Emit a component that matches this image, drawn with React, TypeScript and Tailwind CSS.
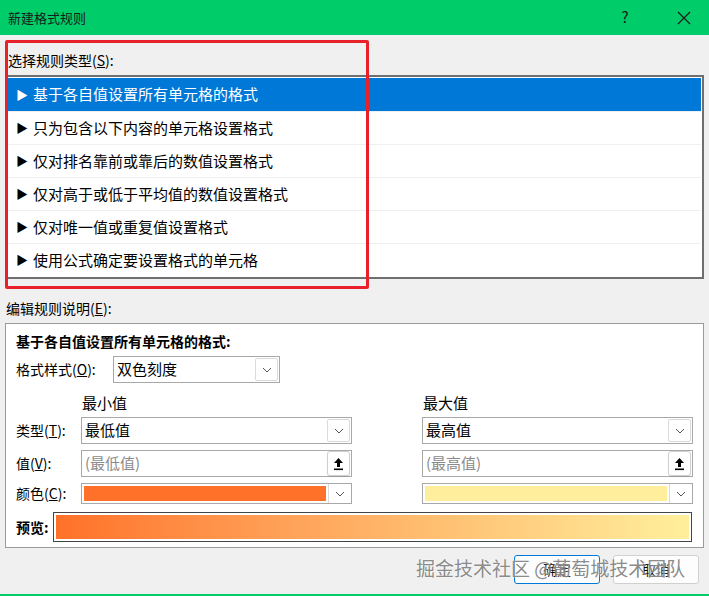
import React from "react";

const font = { fontFamily: '"Noto Sans CJK SC", "Noto Sans", sans-serif' };

function Chevron() {
    return (
        <div className="w-[23px] h-[23px] mr-px border border-[#dadada] rounded-[2px] bg-white flex items-center justify-center">
            <svg width="10" height="6" viewBox="0 0 10 6">
                <path d="M1 1 L5 5 L9 1" fill="none" stroke="#555" strokeWidth="1" />
            </svg>
        </div>
    );
}

function Upload() {
    return (
        <div className="w-[23px] h-[25px] mr-px border border-[#cfcfcf] rounded-[3px] bg-white flex items-center justify-center shadow-[0_1px_1px_rgba(0,0,0,0.08)]">
            <svg width="11" height="14" viewBox="0 0 11 14">
                <path d="M5.5 1 L10 6 L7 6 L7 10 L4 10 L4 6 L1 6 Z" fill="#000" />
                <rect x="1" y="11.5" width="9" height="1.6" fill="#000" />
            </svg>
        </div>
    );
}

function Select({ text, w }: { text: string; w: string }) {
    return (
        <div className={`${w} shrink-0 h-[27px] border border-[#a8a8a8] bg-white flex items-center justify-between`}>
            <span className="pl-[3px] text-[15px] text-black">{text}</span>
            <Chevron />
        </div>
    );
}

function Input({ text }: { text: string }) {
    return (
        <div className="w-[271px] shrink-0 h-[27px] border border-[#a8a8a8] bg-white flex items-center justify-between">
            <span className="pl-[3px] text-[15px] text-[#8a8a8a]">{text}</span>
            <Upload />
        </div>
    );
}

function ColorPick({ color }: { color: string }) {
    return (
        <div className="w-[271px] shrink-0 h-[21px] border border-[#a8a8a8] bg-white flex items-center">
            <div className={`flex-1 h-[15px] ml-[2px] mr-[2px] ${color}`} />
            <div className="w-[23px] h-[19px] border-l border-[#dadada] flex items-center justify-center">
                <svg width="10" height="6" viewBox="0 0 10 6">
                    <path d="M1 1 L5 5 L9 1" fill="none" stroke="#555" strokeWidth="1" />
                </svg>
            </div>
        </div>
    );
}

const rules = [
    "基于各自值设置所有单元格的格式",
    "只为包含以下内容的单元格设置格式",
    "仅对排名靠前或靠后的数值设置格式",
    "仅对高于或低于平均值的数值设置格式",
    "仅对唯一值或重复值设置格式",
    "使用公式确定要设置格式的单元格",
];

export default function App() {
    return (
        <div style={font} className="relative w-[709px] h-[596px] bg-[#f0f0f0] flex flex-col overflow-hidden text-black">
            <div className="h-[35px] bg-[#00cc6a] flex items-center pl-[8px] shrink-0">
                <span className="text-[13px] text-[#1a1a1a] flex-1">新建格式规则</span>
                <span className="text-[15px] text-[#1a1a1a] w-[20px] text-center mr-[42px]">?</span>
                <svg width="14" height="14" viewBox="0 0 14 14" className="mr-[18px]">
                    <path d="M1 1 L13 13 M13 1 L1 13" stroke="#1a1a1a" strokeWidth="1.2" />
                </svg>
            </div>

            <div className="px-[5px] flex flex-col">
                <div className="h-[40px] flex items-end pb-[4px] pl-[3px] text-[14px]">
                    选择规则类型(<span className="underline">S</span>):
                </div>
                <div className="border-2 border-[#6f6f6f] bg-white p-px h-[204px]">
                    {rules.map((r, i) => (
                        <div
                            key={r}
                            className={`h-[33px] flex items-center pl-[8px] text-[15px] ${
                                i === 0 ? "bg-[#0078d7] text-white" : "border-t border-[#efefef] text-black"
                            }`}
                        >
                            <span className="text-[12px] w-[17px]">▶</span>
                            {r}
                        </div>
                    ))}
                </div>

                <div className="h-[44px] flex items-end pb-[4px] pl-[1px] text-[14px]">
                    编辑规则说明(<span className="underline">E</span>):
                </div>
                <div className="border border-[#9a9a9a] bg-white h-[225px] pl-[10px] pr-[10px] pt-[7px] flex flex-col">
                    <div className="text-[14px] font-bold leading-[20px]">基于各自值设置所有单元格的格式:</div>
                    <div className="flex items-center mt-[5px]">
                        <span className="w-[97px] text-[14px]">格式样式(<span className="underline">O</span>):</span>
                        <Select text="双色刻度" w="w-[167px]" />
                    </div>
                    <div className="flex mt-[7px] h-[26px] items-center">
                        <span className="ml-[66px] w-[341px] text-[15px]">最小值</span>
                        <span className="text-[15px]">最大值</span>
                    </div>
                    <div className="flex items-center mt-[1px]">
                        <span className="w-[65px] shrink-0 text-[14px]">类型(<span className="underline">T</span>):</span>
                        <Select text="最低值" w="w-[271px]" />
                        <div className="w-[70px] shrink-0" />
                        <Select text="最高值" w="w-[271px]" />
                    </div>
                    <div className="flex items-center mt-[6px]">
                        <span className="w-[65px] shrink-0 text-[14px]">值(<span className="underline">V</span>):</span>
                        <Input text="(最低值)" />
                        <div className="w-[70px] shrink-0" />
                        <Input text="(最高值)" />
                    </div>
                    <div className="flex items-center mt-[6px]">
                        <span className="w-[65px] shrink-0 text-[14px]">颜色(<span className="underline">C</span>):</span>
                        <ColorPick color="bg-[#ff7128]" />
                        <div className="w-[70px] shrink-0" />
                        <ColorPick color="bg-[#ffef9c]" />
                    </div>
                    <div className="flex items-center mt-[8px] pr-[1px]">
                        <span className="w-[37px] text-[14px] font-bold">预览:</span>
                        <div className="flex-1 h-[30px] border border-[#444] p-[2px] bg-white">
                            <div className="w-full h-full bg-gradient-to-r from-[#ff7128] to-[#ffef9c]" />
                        </div>
                    </div>
                </div>

                <div className="flex justify-end gap-[13px] mt-[7px] pr-[5px]">
                    <div className="w-[86px] h-[29px] border border-[#0078d7] rounded-[3px] bg-[#fdfdfd] flex items-center justify-center text-[14px]">
                        确定
                    </div>
                    <div className="w-[86px] h-[29px] border border-[#d0d0d0] rounded-[3px] bg-[#fdfdfd] flex items-center justify-center text-[14px]">
                        取消
                    </div>
                </div>
            </div>

            <div className="absolute bottom-0 left-0 right-0 h-[2px] bg-[#00cc6a]" />

            <div className="absolute left-[5px] top-[40px] w-[364px] h-[249px] border-[3px] border-[#e8202a] rounded-[2px] pointer-events-none" />

            <div className="absolute left-[416px] top-[554px] text-[19px] text-[#7c7c7c]/90 [text-shadow:0_0_2px_#fff] pointer-events-none">
                掘金技术社区 @葡萄城技术团队
            </div>
        </div>
    );
}
